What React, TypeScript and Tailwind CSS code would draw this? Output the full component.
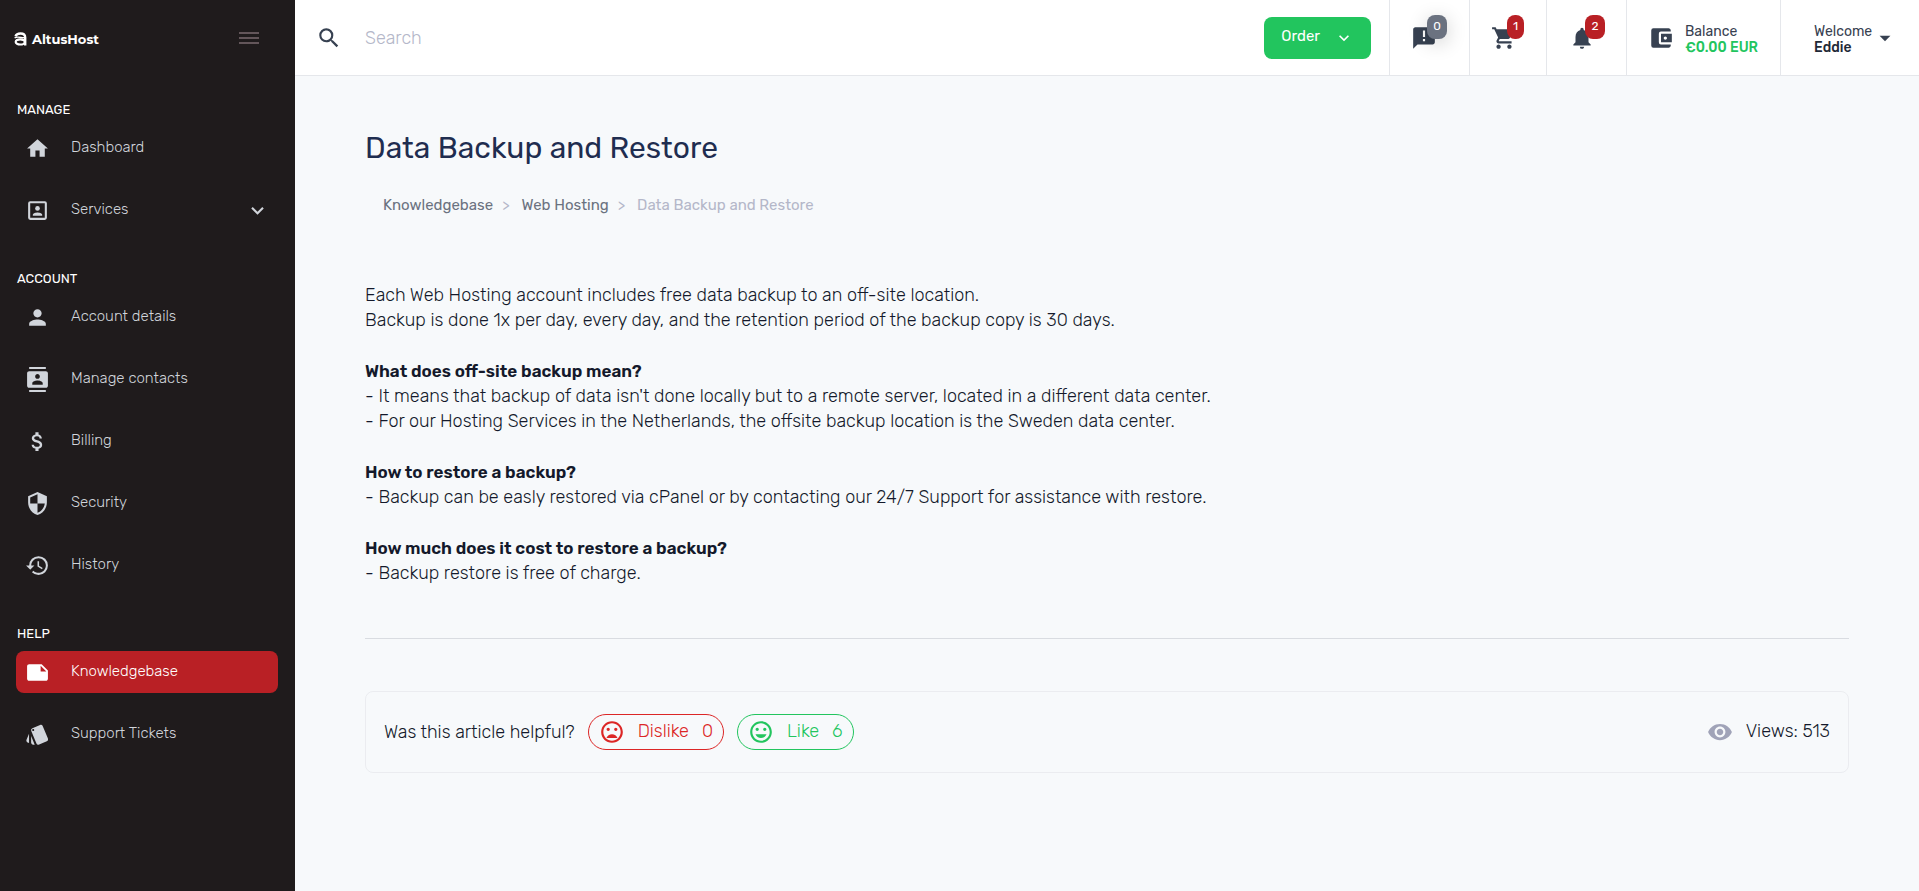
import React from 'react';
import type { IconType } from 'react-icons';
import {
  MdAccountBalanceWallet,
  MdAnnouncement,
  MdArrowDropDown,
  MdAttachMoney,
  MdContacts,
  MdHistory,
  MdHome,
  MdKeyboardArrowDown,
  MdMood,
  MdMoodBad,
  MdNote,
  MdNotifications,
  MdPerson,
  MdSearch,
  MdSecurity,
  MdShoppingCart,
  MdStyle,
  MdVisibility,
} from 'react-icons/md';

interface NavItem {
  label: string;
  icon: IconType;
  active?: boolean;
  expandable?: boolean;
}

interface NavSection {
  title: string;
  items: NavItem[];
}

const PortraitIcon: IconType = ({ size = 24 }) => (
  <svg width={size} height={size} viewBox="0 0 24 24" fill="currentColor">
    <path d="M19 3H5a2 2 0 0 0-2 2v14a2 2 0 0 0 2 2h14a2 2 0 0 0 2-2V5a2 2 0 0 0-2-2Zm0 16H5V5h14v14Z" />
    <circle cx="12" cy="10" r="2.250" />
    <path d="M16.500 16.250c0-1.500-3-2.250-4.500-2.250s-4.500.75-4.500 2.250V17h9v-.75Z" />
  </svg>
);

const sections: NavSection[] = [
  {
    title: 'MANAGE',
    items: [
      { label: 'Dashboard', icon: MdHome },
      { label: 'Services', icon: PortraitIcon, expandable: true },
    ],
  },
  {
    title: 'ACCOUNT',
    items: [
      { label: 'Account details', icon: MdPerson },
      { label: 'Manage contacts', icon: MdContacts },
      { label: 'Billing', icon: MdAttachMoney },
      { label: 'Security', icon: MdSecurity },
      { label: 'History', icon: MdHistory },
    ],
  },
  {
    title: 'HELP',
    items: [
      { label: 'Knowledgebase', icon: MdNote, active: true },
      { label: 'Support Tickets', icon: MdStyle },
    ],
  },
];

const Logo = () => (
  <a href="#" className="flex items-center gap-[5px] pt-0.5 text-white">
    <svg width="13" height="14" viewBox="0 0 13 14" fill="none" stroke="currentColor">
      <path d="M1.500 4.300C2.200 2.200 4 1.500 6.500 1.500c3 0 4.700 1.400 4.700 4V13.500" strokeWidth="2.400" />
      <path d="M.6 5.800C3 4.600 5 5 7 5.500c1.600.4 2.800.4 4-.1" strokeWidth="1.400" />
      <ellipse cx="6.200" cy="9.900" rx="4.500" ry="2.600" strokeWidth="2.200" />
    </svg>
    <span className="font-[Montserrat,'Open_Sans',sans-serif] text-[13px] leading-5 font-bold">AltusHost</span>
  </a>
);

const SidebarLink = ({ label, icon: Icon, active, expandable }: NavItem) => (
  <a
    href="#"
    className={`flex h-[42px] items-center rounded-lg pr-2 pl-[9px] text-[15px] ${
      active ? 'bg-[#b92025] text-white' : 'text-[#d1d5db]'
    }`}
  >
    <Icon size={25} />
    <span className="ml-[21px] flex-1 pb-0.5">{label}</span>
    {expandable && <MdKeyboardArrowDown size={25} />}
  </a>
);

const Sidebar = () => (
  <aside className="w-[295px] shrink-0 bg-[#1f1b1c]">
    <div className="flex h-[76px] items-center justify-between pr-9 pl-[14px]">
      <Logo />
      <button type="button" aria-label="Toggle menu" className="flex flex-col gap-[3px]">
        <span className="h-0.5 w-5 bg-[#63565a]" />
        <span className="h-0.5 w-5 bg-[#63565a]" />
        <span className="h-0.5 w-5 bg-[#63565a]" />
      </button>
    </div>
    <nav className="flex flex-col gap-[38px] pt-6 pr-[17px] pl-4">
      {sections.map((section) => (
        <div key={section.title}>
          <h2 className="mb-[7px] pl-px text-[13px] leading-5 font-normal text-white">{section.title}</h2>
          <div className="flex flex-col gap-5">
            {section.items.map((item) => (
              <SidebarLink key={item.label} {...item} />
            ))}
          </div>
        </div>
      ))}
    </nav>
  </aside>
);

interface HeaderIconProps {
  label: string;
  icon: IconType;
  count: number;
  className: string;
  badgeClass: string;
}

const HeaderIcon = ({ label, icon: Icon, count, className, badgeClass }: HeaderIconProps) => (
  <button
    type="button"
    aria-label={label}
    className={`flex items-center justify-center border-l border-[#e5e7eb] text-[#374151] ${className}`}
  >
    <span className="relative">
      <Icon size={26} />
      <span
        className={`absolute -top-2.5 left-4 flex h-6 items-center justify-center rounded-lg pb-0.5 text-xs font-normal text-white ${badgeClass}`}
      >
        {count}
      </span>
    </span>
  </button>
);

const Header = () => (
  <header className="flex h-[76px] border-b border-[#e5e7eb] bg-white">
    <label className="flex flex-1 items-center pl-[21px]">
      <MdSearch size={26} className="shrink-0 text-[#374151]" />
      <input
        type="text"
        aria-label="Search"
        placeholder="Search"
        className="ml-[23px] w-full bg-transparent pt-0.5 text-[18px] outline-none placeholder:text-[#b4b7c9]"
      />
    </label>
    <div className="flex items-center pr-[18px]">
      <button
        type="button"
        className="flex h-[42px] items-center gap-[14px] rounded-lg bg-[#22c55e] pr-[17px] pl-[17px] text-[15px] font-normal text-white"
      >
        <span className="pb-0.5">Order</span>
        <MdKeyboardArrowDown size={20} />
      </button>
    </div>
    <HeaderIcon
      label="Announcements"
      icon={MdAnnouncement}
      count={0}
      className="w-20 pr-[11px]"
      badgeClass="w-5 bg-[#6b7280] shadow-[0_4px_20px_rgba(0,0,0,0.2)]"
    />
    <HeaderIcon
      label="Cart"
      icon={MdShoppingCart}
      count={1}
      className="w-[77px] pr-2"
      badgeClass="w-[17px] bg-[#b92025]"
    />
    <HeaderIcon
      label="Notifications"
      icon={MdNotifications}
      count={2}
      className="w-20 pr-[9px]"
      badgeClass="w-5 bg-[#b92025]"
    />
    <div className="flex w-[154px] items-center border-l border-[#e5e7eb] pl-[21px] text-[14px] leading-4 font-normal text-[#374151]">
      <MdAccountBalanceWallet size={26} />
      <div className="ml-[11px] pt-1">
        <div>Balance</div>
        <div className="font-medium text-[#22c55e]">€0.00 EUR</div>
      </div>
    </div>
    <button
      type="button"
      className="flex w-[139px] items-center border-l border-[#e5e7eb] pl-[33px] text-left text-[14px] leading-4 font-normal text-[#374151]"
    >
      <span className="pt-1">
        <span className="block">Welcome</span>
        <span className="block font-medium text-[#1f2937]">Eddie</span>
      </span>
      <MdArrowDropDown size={26} />
    </button>
  </header>
);

const Breadcrumbs = () => (
  <nav
    aria-label="Breadcrumb"
    className="mt-[25px] flex gap-[9px] pl-[18px] text-[15px] leading-6 font-normal text-[#b4b7c9]"
  >
    <a href="#" className="text-[#6b7280]">Knowledgebase</a>
    <span className="pr-[3px]">&gt;</span>
    <a href="#" className="text-[#6b7280]">Web Hosting</a>
    <span className="pr-[3px]">&gt;</span>
    <span>Data Backup and Restore</span>
  </nav>
);

const Article = () => (
  <article className="mt-[66px] flex flex-col gap-[26px] text-[18px] leading-[25px]">
    <p>
      Each Web Hosting account includes free data backup to an off-site location.
      <br />
      Backup is done 1x per day, every day, and the retention period of the backup copy is 30 days.
    </p>
    <div>
      <h3 className="text-[17px] font-semibold">What does off-site backup mean?</h3>
      <p>- It means that backup of data isn't done locally but to a remote server, located in a different data center.</p>
      <p>- For our Hosting Services in the Netherlands, the offsite backup location is the Sweden data center.</p>
    </div>
    <div>
      <h3 className="text-[17px] font-semibold">How to restore a backup?</h3>
      <p>- Backup can be easly restored via cPanel or by contacting our 24/7 Support for assistance with restore.</p>
    </div>
    <div>
      <h3 className="text-[17px] font-semibold">How much does it cost to restore a backup?</h3>
      <p>- Backup restore is free of charge.</p>
    </div>
  </article>
);

const Feedback = () => (
  <div className="flex h-[82px] items-center rounded-lg border border-[#e5e7eb]/70 px-[18px] text-[18px] leading-6">
    <span>Was this article helpful?</span>
    <button
      type="button"
      className="ml-[13px] flex h-9 items-center rounded-full border border-[#dc2626] px-2.5 text-[#dc2626]"
    >
      <MdMoodBad size={26} />
      <span className="ml-[13px] pb-0.5">Dislike</span>
      <span className="ml-[13px] pb-0.5">0</span>
    </button>
    <button
      type="button"
      className="ml-[13px] flex h-9 items-center rounded-full border border-[#22c55e] px-2.5 text-[#22c55e]"
    >
      <MdMood size={26} />
      <span className="ml-[13px] pb-0.5">Like</span>
      <span className="ml-[13px] pb-0.5">6</span>
    </button>
    <div className="ml-auto flex items-center gap-[13px]">
      <MdVisibility size={26} className="text-[#a0a3b8]" />
      <span className="pb-0.5">Views: 513</span>
    </div>
  </div>
);

export default function App() {
  return (
    <div className="flex min-h-screen bg-[#f7f9fb] font-[Rubik,Roboto,sans-serif] font-light text-[#14192b]">
      <Sidebar />
      <div className="min-w-0 flex-1">
        <Header />
        <main className="px-[70px] pt-[52px] pb-10">
          <h1 className="text-[30px] leading-10 font-normal text-[#1f2d50]">Data Backup and Restore</h1>
          <Breadcrumbs />
          <Article />
          <hr className="my-[52px] border-[#d1d5db]/80" />
          <Feedback />
        </main>
      </div>
    </div>
  );
}
